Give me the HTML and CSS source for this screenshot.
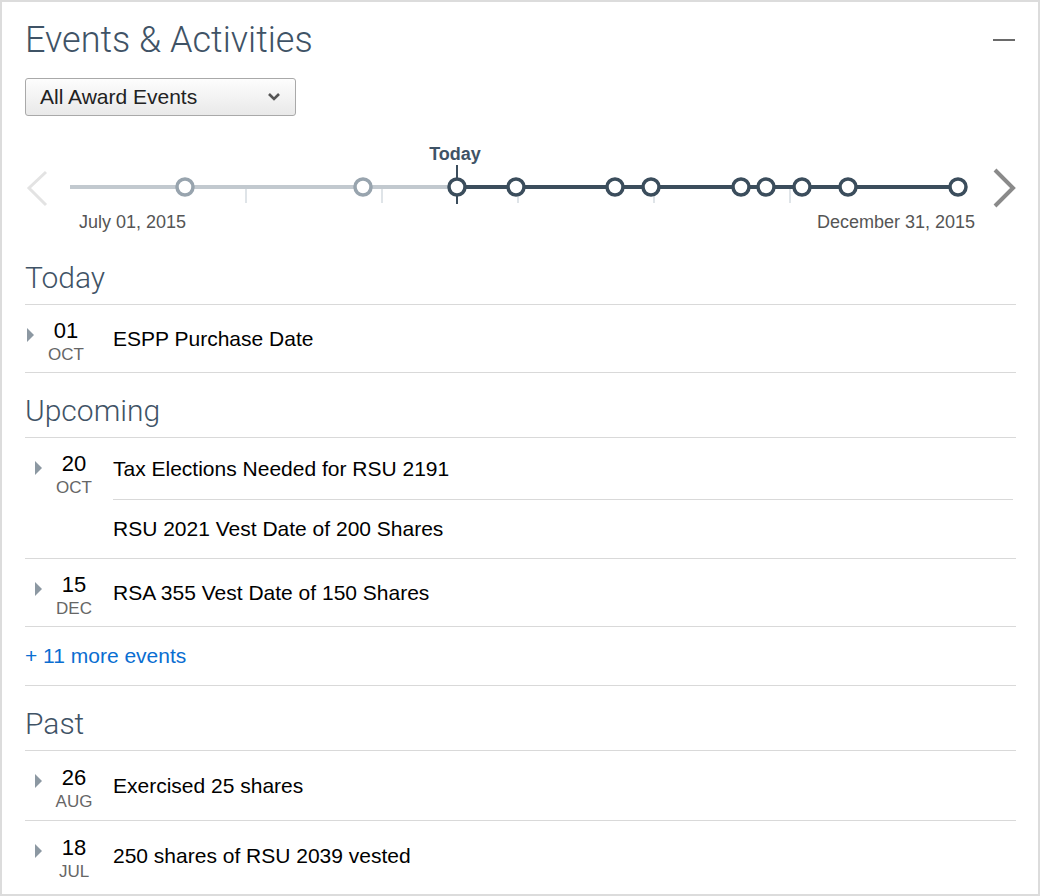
FILE: index.html
```html
<!DOCTYPE html>
<html>
<head>
    <title>Events &amp; Activities</title>
    <meta charset="utf-8">
    <link rel="stylesheet" href="styles.css">
</head>
<body>
<div class="card">
    <div class="header">
        <h1>Events &amp; Activities</h1>
        <span class="collapse" title="Collapse"></span>
    </div>

    <div class="select">
        <span>All Award Events</span>
        <svg class="select-arrow" width="14" height="10" viewBox="0 0 14 10">
            <path d="M2 2 L7 7 L12 2" fill="none" stroke="#555" stroke-width="2.6"/>
        </svg>
    </div>

    <!-- timeline -->
    <svg class="timeline" width="991" height="106" viewBox="0 0 991 106">
        <path d="M21 37 L4 53 L21 70" fill="none" stroke="#e3e3e3" stroke-width="3"/>
        <path d="M970 35 L988 53 L970 71" fill="none" stroke="#8a8a8a" stroke-width="4"/>

        <g stroke="#d5dbe0" stroke-width="1.5">
            <line x1="221" y1="52" x2="221" y2="68"/>
            <line x1="357" y1="52" x2="357" y2="68"/>
            <line x1="493" y1="52" x2="493" y2="68"/>
            <line x1="629" y1="52" x2="629" y2="68"/>
            <line x1="765" y1="52" x2="765" y2="68"/>
        </g>

        <line x1="45" y1="52" x2="432" y2="52" stroke="#c2c9cf" stroke-width="4"/>
        <line x1="432" y1="52" x2="933" y2="52" stroke="#3b4d5c" stroke-width="4"/>
        <line x1="432" y1="30" x2="432" y2="69" stroke="#3b4d5c" stroke-width="2"/>

        <g fill="#fff" stroke="#98a4ae" stroke-width="3.5">
            <circle cx="160" cy="52" r="8"/>
            <circle cx="338" cy="52" r="8"/>
        </g>
        <g fill="#fff" stroke="#3b4d5c" stroke-width="3.5">
            <circle cx="432" cy="52" r="8"/>
            <circle cx="491" cy="52" r="8"/>
            <circle cx="590" cy="52" r="8"/>
            <circle cx="626" cy="52" r="8"/>
            <circle cx="716" cy="52" r="8"/>
            <circle cx="741" cy="52" r="8"/>
            <circle cx="777" cy="52" r="8"/>
            <circle cx="823" cy="52" r="8"/>
            <circle cx="933" cy="52" r="8"/>
        </g>

        <text class="tl-today" x="430" y="25" text-anchor="middle">Today</text>
        <text class="tl-date" x="54" y="93">July 01, 2015</text>
        <text class="tl-date" x="950" y="93" text-anchor="end">December 31, 2015</text>
    </svg>

    <h2 class="section-title first">Today</h2>
    <div class="event event-today">
        <span class="caret"></span>
        <div class="date"><div class="day">01</div><div class="month">OCT</div></div>
        <div class="titles">
            <div class="item">ESPP Purchase Date</div>
        </div>
    </div>

    <h2 class="section-title">Upcoming</h2>
    <div class="event">
        <span class="caret"></span>
        <div class="date"><div class="day">20</div><div class="month">OCT</div></div>
        <div class="titles">
            <div class="item">Tax Elections Needed for RSU 2191</div>
            <div class="item">RSU 2021 Vest Date of 200 Shares</div>
        </div>
    </div>
    <div class="event">
        <span class="caret"></span>
        <div class="date"><div class="day">15</div><div class="month">DEC</div></div>
        <div class="titles">
            <div class="item">RSA 355 Vest Date of 150 Shares</div>
        </div>
    </div>
    <div class="more"><a href="#">+ 11 more events</a></div>

    <h2 class="section-title">Past</h2>
    <div class="event event-past">
        <span class="caret"></span>
        <div class="date"><div class="day">26</div><div class="month">AUG</div></div>
        <div class="titles">
            <div class="item">Exercised 25 shares</div>
        </div>
    </div>
    <div class="event event-past last">
        <span class="caret"></span>
        <div class="date"><div class="day">18</div><div class="month">JUL</div></div>
        <div class="titles">
            <div class="item">250 shares of RSU 2039 vested</div>
        </div>
    </div>
</div>
</body>
</html>
```

FILE: styles.css
```css
/* Page */
body {
    margin: 0;
    font-family: 'Liberation Sans', Arial, Helvetica, sans-serif;
    color: #000;
    background: #fff;
}

.card {
    box-sizing: border-box;
    width: 1040px;
    height: 896px;
    border: 2px solid #dcdcdc;
    padding: 16px 22px 0 23px;
    overflow: hidden;
}

/* Header */
.header {
    display: flex;
    justify-content: space-between;
    align-items: flex-start;
}

h1 {
    margin: 0;
    font-family: Roboto, sans-serif;
    font-weight: 300;
    font-size: 36px;
    line-height: 44px;
    color: #3f5366;
}

.collapse {
    display: block;
    width: 22px;
    height: 2px;
    margin: 21px 1px 0 0;
    background: #6a6a6a;
}

/* Dropdown */
.select {
    box-sizing: border-box;
    width: 271px;
    height: 38px;
    margin-top: 16px;
    padding: 0 14px 0 14px;
    display: flex;
    align-items: center;
    justify-content: space-between;
    border: 1px solid #a9a9a9;
    border-radius: 3px;
    background: linear-gradient(#fdfdfd, #e9e9e9);
    font-size: 21px;
    color: #222;
}

/* Timeline */
.timeline {
    display: block;
    margin-top: 19px;
}

.tl-today {
    font-family: 'Liberation Sans', Arial, sans-serif;
    font-size: 18px;
    font-weight: bold;
    fill: #3f5366;
}

.tl-date {
    font-family: 'Liberation Sans', Arial, sans-serif;
    font-size: 18px;
    fill: #555;
}

/* Sections */
.section-title {
    margin: 0;
    padding: 21px 0 9px;
    font-family: Roboto, sans-serif;
    font-weight: 300;
    font-size: 30px;
    line-height: 34px;
    color: #3f5366;
    border-bottom: 1px solid #d9d9d9;
}

.section-title.first {
    padding-top: 20px;
}

.event {
    display: flex;
    align-items: stretch;
    border-bottom: 1px solid #d9d9d9;
}

.event.last {
    border-bottom: none;
}

.caret {
    flex: none;
    width: 0;
    height: 0;
    margin: 23px 1px 0 10px;
    border-top: 7px solid transparent;
    border-bottom: 7px solid transparent;
    border-left: 7px solid #8c98a2;
}

.date {
    flex: none;
    width: 42px;
    margin: 0 18px 0 10px;
    padding: 14px 0 8px;
    text-align: center;
}

.event-past .date {
    padding-top: 15px;
    padding-bottom: 9px;
}

.event-today .caret {
    margin-left: 2px;
}

.event-today .date {
    margin-right: 26px;
}

.day {
    font-size: 22px;
    line-height: 24px;
}

.month {
    font-size: 17px;
    line-height: 18px;
    margin-top: 3px;
    color: #666;
}

.titles {
    flex: 1;
    display: flex;
    flex-direction: column;
}

.item {
    flex: 1;
    min-height: 61px;
    display: flex;
    align-items: center;
    font-size: 21px;
    line-height: 22px;
}

.item + .item {
    border-top: 1px solid #d9d9d9;
    min-height: 58px;
    margin-right: 3px;
}

/* More link */
.more {
    padding: 18px 0;
    line-height: 22px;
    font-size: 21px;
    border-bottom: 1px solid #d9d9d9;
}

.more a {
    color: #0a6ed1;
    text-decoration: none;
}
```
